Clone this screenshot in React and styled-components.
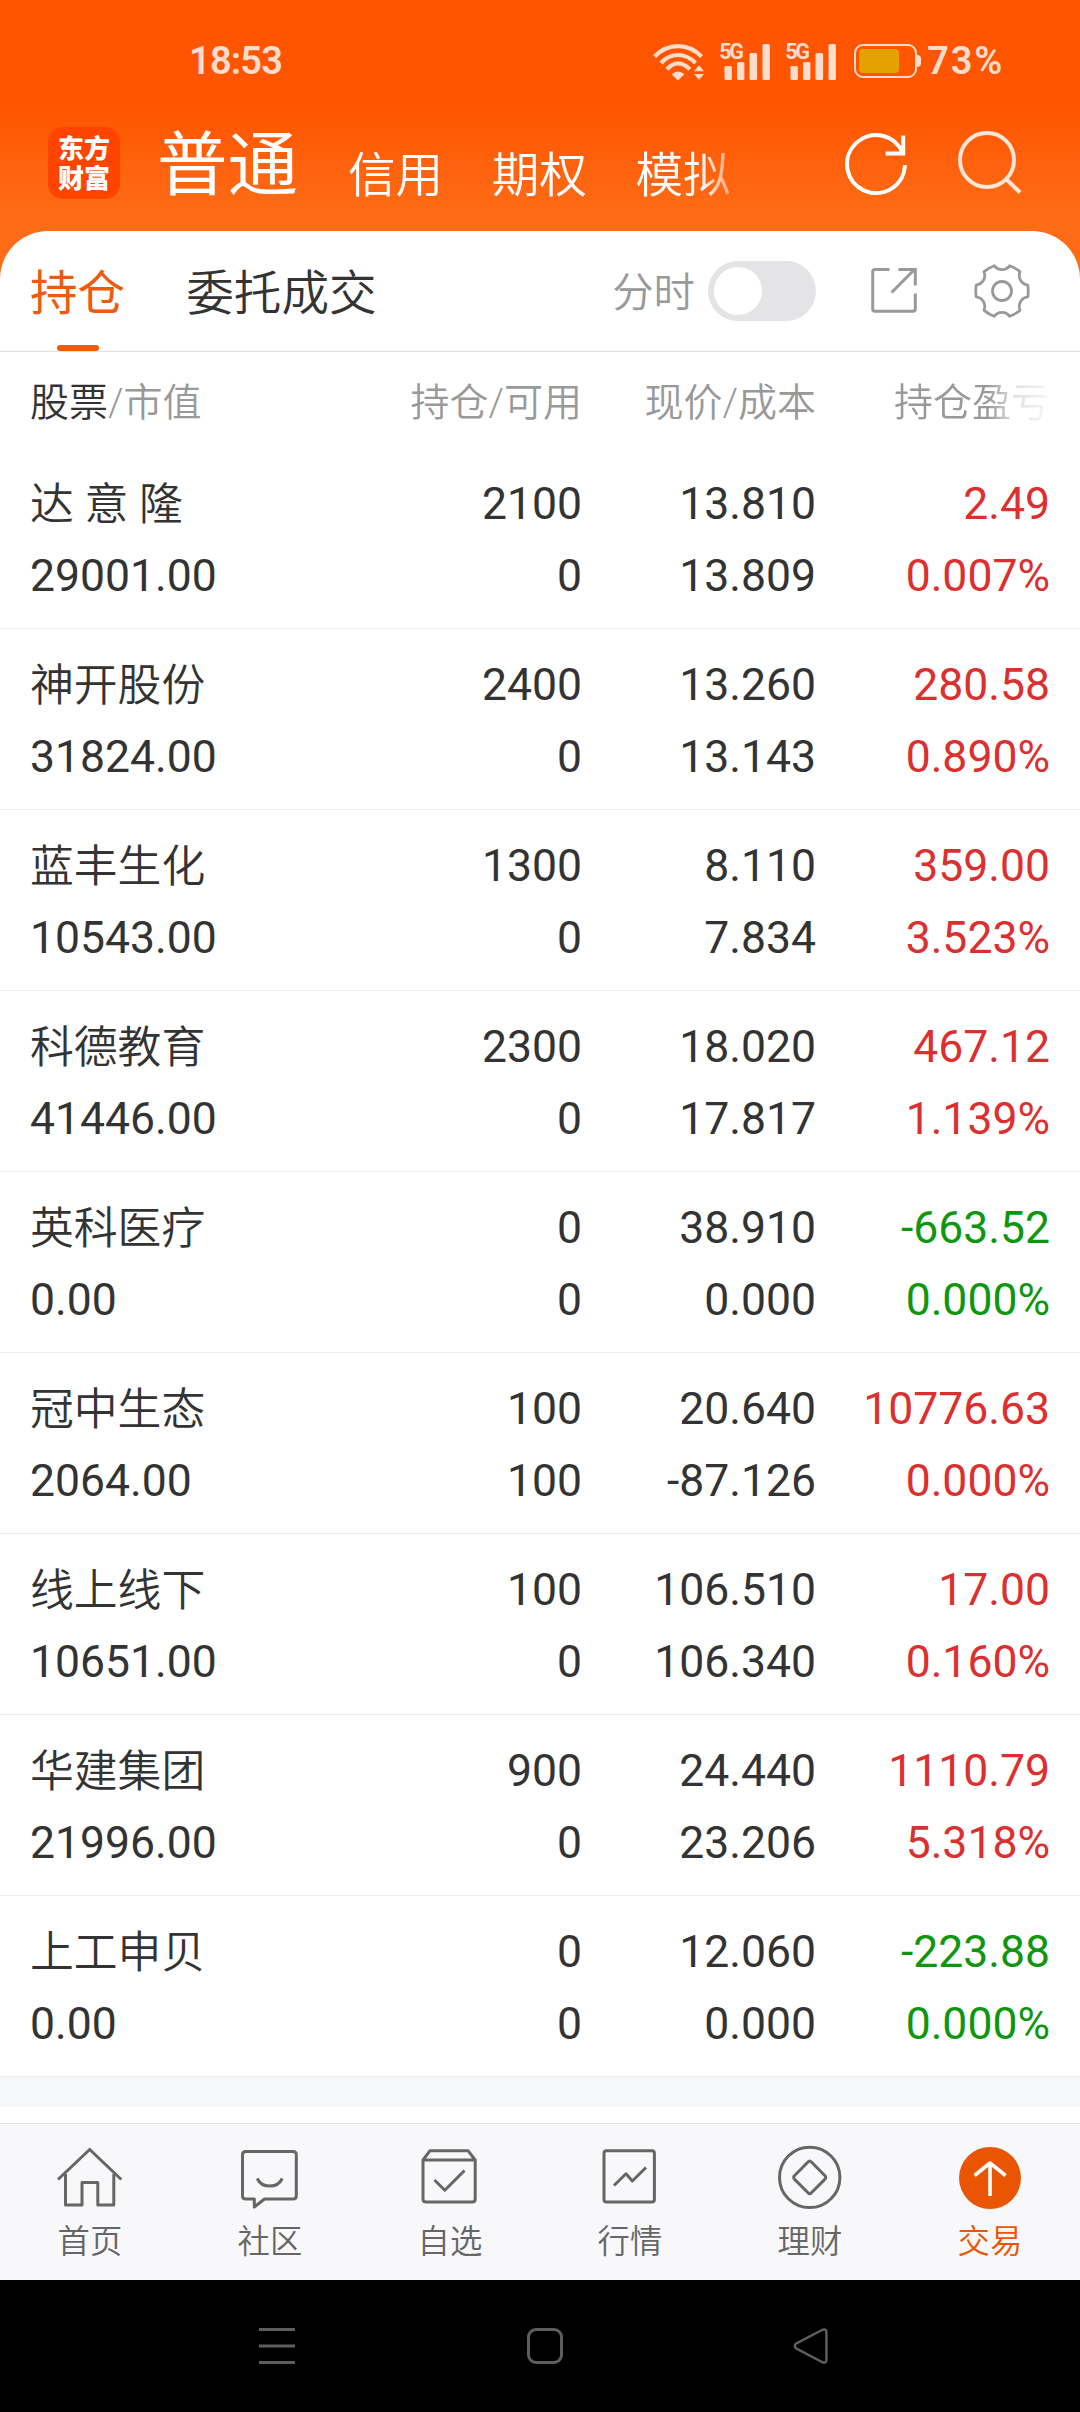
import React from 'react';
import styled, { createGlobalStyle } from 'styled-components';

const GlobalStyle = createGlobalStyle`
  * { box-sizing: border-box; }
  body {
    margin: 0;
    background: #000;
    font-family: Roboto, "Noto Sans CJK SC", sans-serif;
    color: #333;
  }
  svg { display: block; flex: none; overflow: visible; }
`;

const Screen = styled.div`
  width: 1080px;
  height: 2412px;
  display: flex;
  flex-direction: column;
  overflow: hidden;
  background: linear-gradient(#ff5500 0, #ff5500 108px, #ff6c17 215px, #ff6c17 300px);
`;

const StatusBar = styled.header`
  height: 122px;
  flex: none;
  display: flex;
  align-items: center;
  padding: 0 76px 0 189px;
  color: #ffdccb;
`;

const StatusText = styled.span`
  font-size: 38px;
  font-weight: 600;
  line-height: 40px;
  letter-spacing: ${(p) => p.$spacing || 0}px;
`;

const StatusIcons = styled.div`
  display: flex;
  align-items: center;
  margin-left: auto;
`;

const Signal = styled.div`
  display: grid;
  width: 52px;
  height: 40px;
  margin-left: ${(p) => p.$gap}px;
  > * { grid-area: 1 / 1; }
`;

const SignalLabel = styled.span`
  font-size: 21.5px;
  font-weight: 700;
  line-height: 22px;
  letter-spacing: -2.2px;
`;

const Battery = styled.div`
  display: flex;
  align-items: center;
  margin: 0 6px 0 17px;
`;

const BatteryShell = styled.div`
  width: 63px;
  height: 34px;
  padding: 3px;
  border: 2px solid #ffdccb;
  border-radius: 9px;
`;

const BatteryLevel = styled.div`
  width: 40px;
  height: 24px;
  border-radius: 4px;
  background: #e5a100;
`;

const BatteryTip = styled.div`
  width: 4px;
  height: 12px;
  border-radius: 0 4px 4px 0;
  background: #ffdccb;
`;

const AccountBar = styled.nav`
  height: 109px;
  flex: none;
  display: flex;
  align-items: flex-start;
  padding: 5px 54px 0 48px;
  color: #fff;
`;

const Logo = styled.div`
  width: 72px;
  height: 72px;
  flex: none;
  padding: 5px 9px 0 10px;
  border-radius: 15px;
  background: #ff4400;
  font: 900 26px/30px "Noto Sans CJK SC", sans-serif;
  word-break: break-all;
`;

const AccountList = styled.div`
  display: flex;
  align-items: flex-start;
  width: 584px;
  margin-left: 37px;
  padding-top: 1px;
  -webkit-mask-image: linear-gradient(90deg, #000 542px, rgba(0, 0, 0, 0.4) 575px);
  mask-image: linear-gradient(90deg, #000 542px, rgba(0, 0, 0, 0.4) 575px);
`;

const Account = styled.span`
  padding-top: ${(p) => (p.$active ? 0 : 17)}px;
  font-size: ${(p) => (p.$active ? 70.5 : 47.6)}px;
  font-weight: ${(p) => (p.$active ? 400 : 350)};
  line-height: ${(p) => (p.$active ? 76 : 62)}px;
  white-space: nowrap;
  margin-right: ${(p) => (p.$active ? 50 : 48.5)}px;
`;

const AccountActions = styled.div`
  display: flex;
  gap: 42px;
  margin-left: auto;
`;

const Sheet = styled.main`
  flex: none;
  height: 1892px;
  border-radius: 48px 48px 0 0;
  background: #fff;
`;

const Toolbar = styled.div`
  height: 121px;
  display: flex;
  align-items: center;
  padding: 0 50px 0 30px;
  border-bottom: 1px solid #e0e0e0;
`;

const Tab = styled.div`
  height: 120px;
  display: flex;
  flex-direction: column;
  align-items: center;
  justify-content: space-between;
  margin-right: 61px;
  font-size: 47.6px;
  font-weight: ${(p) => (p.$active ? 400 : 350)};
  line-height: 127px;
  white-space: nowrap;
  color: ${(p) => (p.$active ? '#ef5a0c' : '#333')};
`;

const TabLabel = styled.span`
  height: 114px;
`;

const TabMarker = styled.span`
  width: 42px;
  height: 6px;
  border-radius: 3px;
  background: #ef5a0c;
`;

const Tools = styled.div`
  display: flex;
  align-items: center;
  margin-left: auto;
`;

const ToggleLabel = styled.span`
  font-size: 41.4px;
  font-weight: 350;
  line-height: 60px;
  padding-top: 3px;
  color: #999;
  margin-right: 13px;
`;

const Toggle = styled.div`
  width: 108px;
  height: 60px;
  padding: 6px;
  border-radius: 30px;
  background: #e4e4e6;
`;

const Knob = styled.div`
  width: 48px;
  height: 48px;
  border-radius: 50%;
  background: #fff;
`;

const ToolIcon = styled.svg`
  margin-left: ${(p) => p.$gap}px;
`;

const columns = `
  display: grid;
  grid-template-columns: 331px 221px 234px 234px;
  padding: 0 30px;
`;

const HeadRow = styled.div`
  ${columns}
  height: 96px;
  align-items: center;
  padding-bottom: 3px;
  color: #999;
  font-size: 39px;
  font-weight: 350;
`;

const HeadCell = styled.span`
  text-align: ${(p) => (p.$left ? 'left' : 'right')};
  white-space: nowrap;
`;

const SortKey = styled.span`
  color: #333;
`;

const FadingCell = styled(HeadCell)`
  -webkit-mask-image: linear-gradient(90deg, #000 172px, rgba(0, 0, 0, 0.35) 196px, rgba(0, 0, 0, 0.1) 230px);
  mask-image: linear-gradient(90deg, #000 172px, rgba(0, 0, 0, 0.35) 196px, rgba(0, 0, 0, 0.1) 230px);
`;

const tones = { plain: '#333', up: '#dc2f2f', down: '#0f960f' };

const Row = styled.div`
  ${columns}
  height: 181px;
  padding-top: 20px;
  border-bottom: 1px solid #ececec;
`;

const Cell = styled.div`
  display: flex;
  flex-direction: column;
  align-items: ${(p) => (p.$left ? 'flex-start' : 'flex-end')};
  font-size: 44.5px;
  line-height: 72px;
  white-space: nowrap;
  color: ${(p) => tones[p.$tone || 'plain']};
`;

const StockName = styled.span`
  font-size: 43.8px;
  font-weight: 350;
  padding-top: 1px;
  margin-bottom: -1px;
`;

const Divider = styled.div`
  height: 30px;
  background: #f7f8fa;
`;

const BottomBar = styled.nav`
  flex: none;
  height: 157px;
  display: grid;
  grid-template-columns: repeat(6, 1fr);
  border-top: 1px solid #e2e2e4;
  background: #f8f8fa;
`;

const BottomItem = styled.div`
  display: flex;
  flex-direction: column;
  align-items: center;
  padding-top: 18px;
  font-size: 32.4px;
  font-weight: 350;
  line-height: 57px;
  color: ${(p) => (p.$active ? '#ea5504' : '#666')};
`;

const SystemBar = styled.footer`
  flex: none;
  height: 132px;
  display: flex;
  align-items: center;
  gap: 228px;
  padding-left: 257px;
  background: #000;
`;

const Line = ({ size = 72, color = '#666', width = 3, children, ...rest }) => (
  <svg width={size} height={size} viewBox={`0 0 ${size} ${size}`} fill="none" stroke={color}
    strokeWidth={width} strokeLinejoin="round" {...rest}>
    {children}
  </svg>
);

const WifiIcon = () => (
  <svg width="52" height="40" viewBox="0 0 52 40" fill="none" stroke="#ffdccb" strokeWidth="4.2">
    <path d="M1.6 15.4Q12 5.2 25 5.2T48.6 15.4" />
    <path d="M8 22Q15.5 14 25 14T42.5 22" />
    <path d="M14 28.4Q19 22.4 25 22.4T36.8 28.4" />
    <path d="M18.6 33.2Q25 28 31.4 33.2L25 39.4Z" fill="#ffdccb" stroke="none" />
    <path d="M41 30.2L46 24.2L51 30.2ZM41 33L46 38.8L51 33Z" fill="#ffdccb" stroke="none" />
  </svg>
);

const SignalBars = () => (
  <svg width="52" height="40" viewBox="0 0 52 40" fill="#ffdccb">
    <rect x="5.5" y="25" width="7.4" height="14" rx="1.5" />
    <rect x="18" y="21" width="7.4" height="18" rx="1.5" />
    <rect x="30.5" y="12" width="7.6" height="27" rx="1.5" />
    <rect x="43.5" y="3" width="7.4" height="36" rx="1.5" />
  </svg>
);

const gearPath = (() => {
  const point = (deg, r) => {
    const a = (deg * Math.PI) / 180;
    return `${(28 + r * Math.cos(a)).toFixed(2)} ${(28 + r * Math.sin(a)).toFixed(2)}`;
  };
  let d = `M${point(-13, 26.4)}`;
  for (let i = 0; i < 6; i += 1) {
    const a = i * 60;
    d += `Q${point(a, 26.8)} ${point(a + 13, 26.4)}`;
    d += `C${point(a + 20, 20.4)} ${point(a + 40, 20.4)} ${point(a + 47, 26.4)}`;
  }
  return `${d}Z`;
})();

const holdings = [
  ['达 意 隆', '29001.00', '2100', '0', '13.810', '13.809', '2.49', '0.007%', 'up'],
  ['神开股份', '31824.00', '2400', '0', '13.260', '13.143', '280.58', '0.890%', 'up'],
  ['蓝丰生化', '10543.00', '1300', '0', '8.110', '7.834', '359.00', '3.523%', 'up'],
  ['科德教育', '41446.00', '2300', '0', '18.020', '17.817', '467.12', '1.139%', 'up'],
  ['英科医疗', '0.00', '0', '0', '38.910', '0.000', '-663.52', '0.000%', 'down'],
  ['冠中生态', '2064.00', '100', '100', '20.640', '-87.126', '10776.63', '0.000%', 'up'],
  ['线上线下', '10651.00', '100', '0', '106.510', '106.340', '17.00', '0.160%', 'up'],
  ['华建集团', '21996.00', '900', '0', '24.440', '23.206', '1110.79', '5.318%', 'up'],
  ['上工申贝', '0.00', '0', '0', '12.060', '0.000', '-223.88', '0.000%', 'down'],
];

const bottomItems = [
  ['首页', (
    <>
      <path d="M4 37.5L35.7 7.5L67.3 37.5" strokeLinejoin="miter" />
      <path d="M11.5 32V63H28V40.5H43.8V63H59.8V32" />
    </>
  )],
  ['社区', (
    <>
      <path d="M12 9.5H59Q62.3 9.5 62.3 12.5V54Q62.3 57 59 57H30.5L20.3 65V57H12Q8.5 57 8.5 54V12.5Q8.5 9.5 12 9.5Z" />
      <path d="M23.2 36.5C28 46.6 43.5 46.6 48.2 36.5" />
    </>
  )],
  ['自选', (
    <>
      <path d="M9 18L16 8.7H54L61.2 18V57Q61.2 60 58 60H12Q9 60 9 57ZM9 18H61.2" />
      <path d="M20.5 38L30.8 48.2L50.5 28.5" />
    </>
  )],
  ['行情', (
    <>
      <rect x="10" y="8.7" width="50.4" height="51.3" rx="2.5" />
      <path d="M20 43.5L32 31.8L38.3 39L52 25.5" />
    </>
  )],
  ['理财', (
    <>
      <circle cx="35.7" cy="35.4" r="30.2" />
      <path d="M34 20Q35.7 18 37.4 20L51 33.7Q52.4 35.4 51 37.1L37.4 50.8Q35.7 52.8 34 50.8L20.4 37.1Q19 35.4 20.4 33.7Z" />
    </>
  )],
  ['交易', (
    <>
      <circle cx="36" cy="36" r="31" fill="#ea5504" stroke="none" />
      <path d="M36 54V21M20.6 33.5L36 21L51.6 33.5" stroke="#fff" strokeWidth="3.6" />
    </>
  )],
];

export default function App() {
  return (
    <Screen>
      <GlobalStyle />
      <StatusBar>
        <StatusText $spacing={-0.8}>18:53</StatusText>
        <StatusIcons>
          <WifiIcon />
          {[14, 14].map((gap, i) => (
            <Signal key={i} $gap={gap}>
              <SignalLabel>5G</SignalLabel>
              <SignalBars />
            </Signal>
          ))}
          <Battery>
            <BatteryShell><BatteryLevel /></BatteryShell>
            <BatteryTip />
          </Battery>
          <StatusText $spacing={1.8}>73%</StatusText>
        </StatusIcons>
      </StatusBar>

      <AccountBar>
        <Logo>东方财富</Logo>
        <AccountList>
          <Account $active>普通</Account>
          <Account>信用</Account>
          <Account>期权</Account>
          <Account>模拟</Account>
        </AccountList>
        <AccountActions>
          <Line size={72} color="#fff" width={4} strokeLinejoin="miter">
            <path d="M65 38A29 29 0 1 1 63 26.5" />
            <path d="M63.2 8.5V26.5H45.5" />
          </Line>
          <Line size={72} color="#ffe6d8" width={4}>
            <circle cx="33" cy="33" r="27" />
            <path d="M52.5 52.5L66 65.5" />
          </Line>
        </AccountActions>
      </AccountBar>

      <Sheet>
        <Toolbar>
          <Tab $active><TabLabel>持仓</TabLabel><TabMarker /></Tab>
          <Tab><TabLabel>委托成交</TabLabel></Tab>
          <Tools>
            <ToggleLabel>分时</ToggleLabel>
            <Toggle><Knob /></Toggle>
            <ToolIcon $gap={54} width="48" height="48" viewBox="0 0 48 48" fill="none" stroke="#999" strokeWidth="3">
              <path d="M19.5 2.5H5Q2.7 2.5 2.7 5V42Q2.7 44.3 5 44.3H43Q45.3 44.3 45.3 42V26.5" />
              <path d="M28.5 2.5H45.3V18.5M21.6 25.5L44 3" />
            </ToolIcon>
            <ToolIcon $gap={56} width="56" height="56" viewBox="0 0 56 56" fill="none" stroke="#999" strokeWidth="2.8" strokeLinejoin="round">
              <path d={gearPath} />
              <circle cx="28" cy="28" r="9.5" />
            </ToolIcon>
          </Tools>
        </Toolbar>

        <HeadRow>
          <HeadCell $left><SortKey>股票</SortKey>/市值</HeadCell>
          <HeadCell>持仓/可用</HeadCell>
          <HeadCell>现价/成本</HeadCell>
          <FadingCell>持仓盈亏</FadingCell>
        </HeadRow>

        {holdings.map(([name, value, held, usable, price, cost, profit, rate, tone]) => (
          <Row key={name}>
            <Cell $left><StockName>{name}</StockName><span>{value}</span></Cell>
            <Cell><span>{held}</span><span>{usable}</span></Cell>
            <Cell><span>{price}</span><span>{cost}</span></Cell>
            <Cell $tone={tone}><span>{profit}</span><span>{rate}</span></Cell>
          </Row>
        ))}
        <Divider />
      </Sheet>

      <BottomBar>
        {bottomItems.map(([label, icon], i) => (
          <BottomItem key={label} $active={i === 5}>
            <Line>{icon}</Line>
            <span>{label}</span>
          </BottomItem>
        ))}
      </BottomBar>

      <SystemBar>
        <Line size={40} color="#5e5e5e"><path d="M2 3.5H38M2 20H38M2 36.5H38" /></Line>
        <Line size={40} color="#5e5e5e"><rect x="3.5" y="3.5" width="33" height="33" rx="7.5" /></Line>
        <Line size={40} color="#5e5e5e" width={2.5}>
          <path d="M3 17.6L29 4Q33.4 2.2 33.4 6V34Q33.4 37.8 29 36L3 22.4Q0.6 20 3 17.6Z" />
        </Line>
      </SystemBar>
    </Screen>
  );
}
